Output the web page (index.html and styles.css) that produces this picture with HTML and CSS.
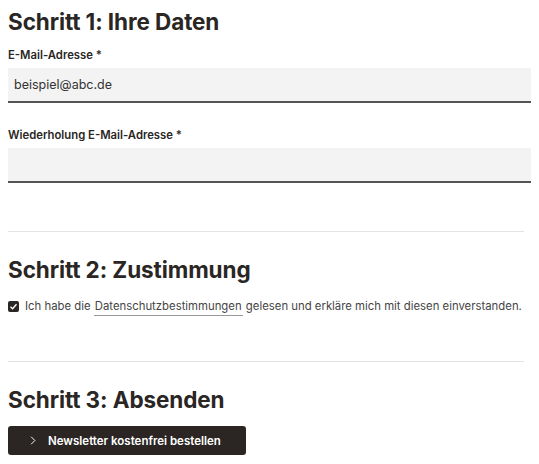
FILE: index.html
```html
<!DOCTYPE html>
<html lang="de">
<head>
    <meta charset="UTF-8">
    <meta name="viewport" content="width=device-width, initial-scale=1.0">
    <title>Newsletter bestellen</title>
    <link rel="stylesheet" href="styles.css">
</head>
<body>

    <form class="newsletter-form">
        <!-- Schritt 1 -->
        <section class="step">
            <h2>Schritt 1: Ihre Daten</h2>
            <div class="field">
                <label for="email">E-Mail-Adresse *</label>
                <input type="email" id="email" class="input-field" value="beispiel@abc.de">
            </div>
            <div class="field">
                <label for="email2">Wiederholung E-Mail-Adresse *</label>
                <input type="email" id="email2" class="input-field">
            </div>
        </section>

        <hr class="divider">

        <!-- Schritt 2 -->
        <section class="step">
            <h2>Schritt 2: Zustimmung</h2>
            <label class="consent">
                <span class="check">
                    <svg viewBox="0 0 12 12" width="9" height="9"><path d="M2 6.2 4.8 9 10 3" fill="none" stroke="#fff" stroke-width="1.8"/></svg>
                </span>
                <span>Ich habe die <a href="#">Datenschutzbestimmungen</a> gelesen und erkläre mich mit diesen einverstanden.</span>
            </label>
        </section>

        <hr class="divider">

        <!-- Schritt 3 -->
        <section class="step">
            <h2>Schritt 3: Absenden</h2>
            <button type="submit" class="submit-btn">
                <svg viewBox="0 0 8 12" width="6" height="9"><path d="M1.5 1 6.5 6 1.5 11" fill="none" stroke="#fff" stroke-width="1.3"/></svg>
                Newsletter kostenfrei bestellen
            </button>
        </section>
    </form>

</body>
</html>
```

FILE: styles.css
```css
body {
    font-family: Inter, "Noto Sans", sans-serif;
    color: #2a2624;
    background-color: white;
    margin: 0;
    padding: 0 8px;
}
.newsletter-form {
    padding-top: 8px;
}
.step h2 {
    font-size: 22.5px;
    font-weight: 700;
    line-height: 28px;
    margin: 0 0 12px;
    letter-spacing: -0.1px;
}
.field {
    margin-bottom: 25px;
}
.field label {
    display: block;
    font-size: 11.3px;
    font-weight: 600;
    line-height: 14px;
    margin-bottom: 6px;
}
.input-field {
    display: block;
    box-sizing: border-box;
    width: 523px;
    height: 35px;
    padding: 0 6px;
    border: none;
    border-bottom: 2px solid #555;
    background-color: #f3f3f3;
    font-family: Inter, "Noto Sans", sans-serif;
    font-size: 12.5px;
    color: #333;
}
.divider {
    width: 516px;
    margin: 48px 0 24px;
    border: none;
    border-top: 1px solid #e3e3e3;
}
.consent {
    display: flex;
    align-items: center;
    gap: 6px;
    margin-top: 15px;
    font-size: 11.35px;
    color: #444;
}
.check {
    display: flex;
    align-items: center;
    justify-content: center;
    width: 11px;
    height: 11px;
    border-radius: 2px;
    background-color: #2a2624;
}
.consent a {
    color: #444;
    text-decoration: none;
    border-bottom: 1px solid #999;
    padding: 0 1px 2px;
}
.submit-btn {
    display: flex;
    align-items: center;
    gap: 12px;
    width: 238px;
    height: 29px;
    margin-top: 12px;
    padding: 0 22px;
    border: none;
    border-radius: 3px;
    background-color: #2b2624;
    color: white;
    font-family: Inter, "Noto Sans", sans-serif;
    font-size: 11.5px;
    font-weight: 600;
    cursor: pointer;
}
```
